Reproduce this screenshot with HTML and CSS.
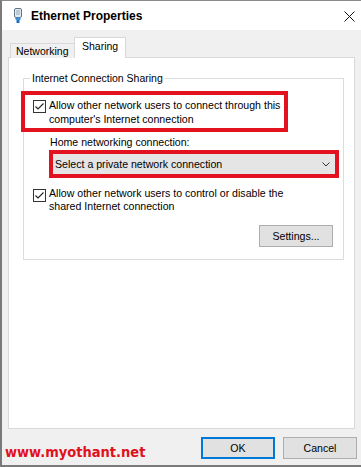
FILE: index.html
```html
<!DOCTYPE html>
<html lang="en">
<head>
    <meta charset="UTF-8">
    <meta name="viewport" content="width=device-width, initial-scale=1.0">
    <title>Ethernet Properties</title>
    <link rel="stylesheet" href="styles.css">
</head>
<body>
    <div id="window">
        <header class="titlebar">
            <svg class="app-icon" width="10" height="15" viewBox="0 0 10 15">
                <rect x="1.5" y="0.5" width="7" height="9" rx="1.5" fill="#e4ebf2" stroke="#5f7384"/>
                <rect x="3.5" y="2" width="1" height="5" fill="#8fa6bb"/>
                <rect x="5.5" y="2" width="1" height="5" fill="#8fa6bb"/>
                <rect x="2.5" y="9.5" width="5" height="2.5" fill="#3d8fd6"/>
                <rect x="3.5" y="12" width="3" height="3" fill="#1f6fb8"/>
            </svg>
            <span class="title">Ethernet Properties</span>
            <svg class="close" width="11" height="11" viewBox="0 0 11 11">
                <path d="M0.5 0.5 L10.5 10.5 M10.5 0.5 L0.5 10.5" stroke="#111" stroke-width="1"/>
            </svg>
        </header>

        <div class="content">
            <div class="tabs">
                <div class="tab">Networking</div>
                <div class="tab active">Sharing</div>
            </div>

            <div class="panel">
                <fieldset class="group">
                    <legend>Internet Connection Sharing</legend>

                    <div class="check-row highlight first">
                        <span class="checkbox">
                            <svg width="13" height="13" viewBox="0 0 13 13">
                                <rect x="0.5" y="0.5" width="12" height="12" fill="#fff" stroke="#333"/>
                                <path d="M2.5 6.5 L5 9 L10.5 3.5" fill="none" stroke="#222" stroke-width="1.1"/>
                            </svg>
                        </span>
                        <span class="check-text">Allow other network users to connect through this computer's Internet connection</span>
                    </div>

                    <div class="home-label">Home networking connection:</div>

                    <div class="combo-wrap highlight">
                        <div class="combo">
                            <span>Select a private network connection</span>
                            <svg width="8" height="5" viewBox="0 0 8 5">
                                <path d="M0.5 0.5 L4 4 L7.5 0.5" fill="none" stroke="#333" stroke-width="1"/>
                            </svg>
                        </div>
                    </div>

                    <div class="check-row second">
                        <span class="checkbox">
                            <svg width="13" height="13" viewBox="0 0 13 13">
                                <rect x="0.5" y="0.5" width="12" height="12" fill="#fff" stroke="#333"/>
                                <path d="M2.5 6.5 L5 9 L10.5 3.5" fill="none" stroke="#222" stroke-width="1.1"/>
                            </svg>
                        </span>
                        <span class="check-text">Allow other network users to control or disable the shared Internet connection</span>
                    </div>

                    <div class="settings-row">
                        <button class="btn">Settings...</button>
                    </div>
                </fieldset>
            </div>

            <footer class="footer">
                <span class="watermark">www.myothant.net</span>
                <div class="buttons">
                    <button class="btn default">OK</button>
                    <button class="btn">Cancel</button>
                </div>
            </footer>
        </div>
    </div>
</body>
</html>
```

FILE: styles.css
```css
*{
    box-sizing: border-box;
}

body{
    margin: 0;
    background-color: #f0f0f0;
    font-family: "Liberation Sans", Arial, sans-serif;
    font-size: 10px;
    color: #000;
}

#window{
    width: 361px;
    height: 467px;
    border-top: 1px solid #8a8a8a;
    border-left: 2px solid #7a7a7a;
    border-bottom: 2px solid #7a7a7a;
    display: flex;
    flex-direction: column;
    overflow: hidden;
}

.titlebar{
    height: 29px;
    background-color: #fff;
    display: flex;
    align-items: center;
    padding-left: 11px;
}

.title{
    font-weight: bold;
    font-size: 12px;
    margin-left: 8px;
    margin-top: 1px;
}

.close{
    margin-left: auto;
    margin-right: 6px;
    margin-top: 1px;
}

.content{
    flex: 1;
    background-color: #f0f0f0;
    padding: 7px 6px 0 6px;
    display: flex;
    flex-direction: column;
}

.tabs{
    display: flex;
    align-items: flex-end;
    height: 21px;
    margin-left: 2px;
    margin-bottom: -1px;
    position: relative;
    z-index: 1;
}

.tab{
    height: 15px;
    width: 65px;
    border: 1px solid #d9d9d9;
    border-bottom: none;
    background-color: #f0f0f0;
    padding-left: 5px;
    line-height: 14px;
    font-size: 10.5px;
}

.tab.active{
    height: 21px;
    width: 52px;
    margin-left: -1px;
    background-color: #fff;
    padding-left: 7px;
    line-height: 17px;
}

.panel{
    width: 347px;
    height: 372px;
    background-color: #fff;
    border: 1px solid #d9d9d9;
}

.group{
    margin: 14px 10px 0 14px;
    padding: 0 0 12px 0;
    border: 1px solid #dcdcdc;
    min-width: 0;
}

.group legend{
    margin-left: 6px;
    padding: 0 2px;
    line-height: 12px;
    font-size: 10.5px;
}

.highlight{
    border: 4px solid #e3121f;
}

.check-row{
    display: flex;
    align-items: flex-start;
    line-height: 14px;
    font-size: 10.6px;
}

.check-row.first{
    width: 267px;
    height: 41px;
    margin: 7px 0 0 -3px;
    padding: 3px 0 0 8px;
}

.check-row.second{
    margin: 9px 0 0 9px;
    line-height: 13px;
}

.checkbox{
    display: block;
    width: 13px;
    height: 13px;
    margin-top: 2px;
    margin-right: 3px;
    flex-shrink: 0;
}

.checkbox svg{
    display: block;
}

.check-text{
    width: 245px;
}

.home-label{
    margin: 3px 0 0 26px;
    line-height: 14px;
    font-size: 10.6px;
}

.combo-wrap{
    width: 290px;
    height: 28px;
    margin: 1px 0 0 25px;
}

.combo{
    height: 20px;
    background-color: #e5e5e5;
    display: flex;
    align-items: center;
    justify-content: space-between;
    padding: 0 5px 0 2px;
    font-size: 10.6px;
}

.combo svg{
    display: block;
}

.settings-row{
    display: flex;
    justify-content: flex-end;
    margin: 12px 10px 0 0;
}

.btn{
    width: 74px;
    height: 22px;
    background-color: #e1e1e1;
    border: 1px solid #adadad;
    font-family: "Liberation Sans", Arial, sans-serif;
    font-size: 10.6px;
    color: #000;
    padding: 0;
}

.btn.default{
    border: 2px solid #0078d7;
}

.footer{
    flex: 1;
    display: flex;
    align-items: center;
    justify-content: space-between;
    padding-top: 1px;
}

.watermark{
    margin-left: -3px;
    margin-top: 8px;
    color: #e0101c;
    font-family: "DejaVu Sans Condensed", "DejaVu Sans", sans-serif;
    font-stretch: condensed;
    font-weight: bold;
    font-size: 14.5px;
}

.buttons{
    display: flex;
    gap: 8px;
    margin-right: -2px;
}
```
